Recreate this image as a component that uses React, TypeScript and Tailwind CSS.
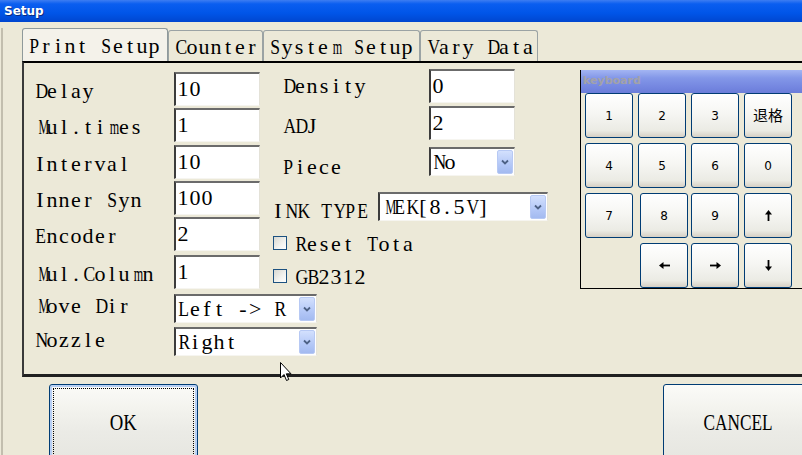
import React from "react";

// SimSun-like look: a serif face laid out in fixed 12px cells, wide glyphs narrowed
const cellFit = (c: string) => {
  if ("MWmw".includes(c)) return "scale-x-[0.55]";
  if (/[A-Z]/.test(c) && c !== "I" && c !== "J") return "scale-x-[0.8]";
  return "";
};

const Mono = ({ t }: { t: string }) => (
  <>
    {Array.from(t).map((c, i) => (
      <span key={i} className="inline-block w-[12px] text-center">
        <span className={`inline-block ${cellFit(c)}`}>{c === " " ? "\u00a0" : c}</span>
      </span>
    ))}
  </>
);

const boxBorder =
  "bg-white border-t-2 border-l-2 border-r border-b border-t-[#6b6b6b] border-l-[#3c3c3c] border-r-[#e4e2d8] border-b-[#f6f5f0]";

const ComboArrow = () => (
  <div className="w-[16px] h-full shrink-0 rounded-[2px] border border-[#b7c9f4] bg-[linear-gradient(to_bottom,#d3e0fd,#b4c8f7_60%,#a3baf0)] flex items-center justify-center">
    <svg width="8" height="6" viewBox="0 0 8 6">
      <path d="M1 1.5 L4 4.5 L7 1.5" fill="none" stroke="#4d6185" strokeWidth="1.8" />
    </svg>
  </div>
);

const TextBox = ({ value }: { value: string }) => (
  <div className={`${boxBorder} h-[34px] w-[86px] shrink-0 flex items-center pl-[1px] whitespace-nowrap`}>
    <span className="-mt-[2px]">
      <Mono t={value} />
    </span>
  </div>
);

const Combo = ({ value, w }: { value: string; w: string }) => (
  <div className={`${boxBorder} h-[29px] ${w} shrink-0 flex items-stretch pl-[1px] pr-[1px] py-[1px]`}>
    <span className="flex-1 leading-[24px] whitespace-nowrap overflow-hidden">
      <Mono t={value} />
    </span>
    <ComboArrow />
  </div>
);

const CheckBox = ({ label, className = "" }: { label: string; className?: string }) => (
  <div className={`flex items-center h-[20px] ${className}`}>
    <div className="w-[14px] h-[14px] shrink-0 border border-[#1c5180] bg-[linear-gradient(135deg,#d8d8d1,#f3f3ef_60%,#ffffff)] ml-[1px]" />
    <span className="ml-[7px] whitespace-nowrap">
      <Mono t={label} />
    </span>
  </div>
);

const Arrow = ({ dir }: { dir: "up" | "down" | "left" | "right" }) => {
  const rot = { up: 0, right: 90, down: 180, left: 270 }[dir];
  return (
    <svg width="13" height="13" viewBox="0 0 13 13">
      <g transform={`rotate(${rot} 6.5 6.5)`}>
        <path d="M6.5 1 L10 5.5 L3 5.5 Z" fill="#000" />
        <rect x="5.6" y="5" width="1.8" height="7" fill="#000" />
      </g>
    </svg>
  );
};

const KeyButton = ({ children, className = "" }: { children?: React.ReactNode; className?: string }) => (
  <div
    className={`h-[45px] w-[48px] rounded-[3px] border border-[#003c74] bg-[linear-gradient(to_bottom,#ffffff,#f6f6f3_45%,#ebebe4_85%,#d6d0c5)] flex items-center justify-center text-[12px] font-['DejaVu_Sans',sans-serif] text-black ${className}`}
  >
    {children}
  </div>
);

const leftRows = [
  { label: "Delay", value: "10", mt: "mt-[9px]" },
  { label: "Mul.times", value: "1", mt: "mt-[2px]" },
  { label: "Interval", value: "10", mt: "mt-[3px]" },
  { label: "Inner Syn", value: "100", mt: "mt-[2px]" },
  { label: "Encoder", value: "2", mt: "mt-[2px]" },
  { label: "Mul.Column", value: "1", mt: "mt-[4px]" },
];

const tabs = [
  { name: "Print Setup", w: "w-[146px]", active: true },
  { name: "Counter", w: "w-[95px]", active: false },
  { name: "System Setup", w: "w-[157px]", active: false },
  { name: "Vary Data", w: "w-[118px]", active: false },
];

export default function App() {
  return (
    <div className="relative w-[802px] h-[455px] overflow-hidden bg-[#ece9d8] text-black font-['Liberation_Serif','DejaVu_Serif',serif] text-[22px]">
      {/* title bar */}
      <div className="h-[22px] bg-[linear-gradient(to_bottom,#3d7df2_0%,#0a5ef0_18%,#0055e8_60%,#0046cf_100%)] flex items-center pl-[4px]">
        <span className="font-['DejaVu_Sans',sans-serif] font-bold text-[12px] text-white [text-shadow:1px_1px_0_#0a2a80]">
          Setup
        </span>
      </div>

      <div className="ml-[1px] border-l-[2px] border-[#c2beae] h-[433px] pl-[19px]">
        {/* tabs */}
        <div className="mt-[6px] h-[33px] flex items-end">
          {tabs.map((t) => (
            <div
              key={t.name}
              className={`${t.w} shrink-0 ${
                t.active ? "h-[33px] bg-[#f4f2ea] border-[#8f9a9b]" : "h-[31px] bg-[#ece9d8] border-[#9ba3a4]"
              } border border-b-0 rounded-t-[3px] flex items-center pl-[5px] whitespace-nowrap`}
            >
              <Mono t={t.name} />
            </div>
          ))}
        </div>

        {/* panel */}
        <div className="h-[316px] border-t-2 border-l-2 border-b-[3px] border-t-black border-l-[#3a3a3a] border-b-[#202020] flex">
          {/* left column */}
          <div className="w-[248px] shrink-0 pl-[10px]">
            {leftRows.map((r) => (
              <div key={r.label} className={`flex items-center h-[34px] ${r.mt}`}>
                <span className="w-[140px] shrink-0 whitespace-nowrap mt-[2px]">
                  <Mono t={r.label} />
                </span>
                <TextBox value={r.value} />
              </div>
            ))}
            <div className="flex items-center h-[29px] mt-[5px]">
              <span className="w-[140px] shrink-0 whitespace-nowrap -mt-[7px]">
                <Mono t="Move Dir" />
              </span>
              <Combo value="Left -> R" w="w-[143px]" />
            </div>
            <div className="flex items-center h-[29px] mt-[4px]">
              <span className="w-[140px] shrink-0 -mt-[4px]">
                <Mono t="Nozzle" />
              </span>
              <Combo value="Right" w="w-[143px]" />
            </div>
          </div>

          {/* middle column */}
          <div className="w-[276px] shrink-0">
            <div className="flex items-center h-[34px] mt-[6px] pl-[10px]">
              <span className="w-[147px] shrink-0 -mt-[2px]">
                <Mono t="Density" />
              </span>
              <TextBox value="0" />
            </div>
            <div className="flex items-center h-[34px] mt-[3px] pl-[10px]">
              <span className="w-[147px] shrink-0 mt-[4px]">
                <Mono t="ADJ" />
              </span>
              <TextBox value="2" />
            </div>
            <div className="flex items-center h-[29px] mt-[7px] pl-[10px]">
              <span className="w-[147px] shrink-0 mt-[10px]">
                <Mono t="Piece" />
              </span>
              <Combo value="No" w="w-[86px]" />
            </div>
            <div className="flex items-center h-[29px] mt-[16px]">
              <span className="w-[106px] shrink-0 mt-[8px] whitespace-nowrap">
                <Mono t="INK TYPE" />
              </span>
              <Combo value="MEK[8.5V]" w="w-[170px]" />
            </div>
            <CheckBox label="Reset Tota" className="mt-[12px]" />
            <CheckBox label="GB2312" className="mt-[13px]" />
          </div>

          {/* keyboard */}
          <div className="ml-[32px] mt-[7px] w-[240px] shrink-0 h-[219px] border border-black border-t-0">
            <div className="h-[23px] bg-[linear-gradient(to_bottom,#a3b5f3,#8397e8_35%,#7486e0_75%,#6b7dd9)] flex items-center pl-[2px]">
              <span className="font-['DejaVu_Sans',sans-serif] font-bold text-[11px] text-[#a2a2a8]">keyboard</span>
            </div>
            <div className="pl-[4px] grid grid-cols-[48px_48px_48px_48px] gap-x-[5px] gap-y-[5px]">
              <KeyButton>1</KeyButton>
              <KeyButton>2</KeyButton>
              <KeyButton>3</KeyButton>
              <KeyButton className="text-[15px] font-['Noto_Sans_CJK_SC',sans-serif]">退格</KeyButton>
              <KeyButton>4</KeyButton>
              <KeyButton>5</KeyButton>
              <KeyButton>6</KeyButton>
              <KeyButton>0</KeyButton>
              <KeyButton>7</KeyButton>
              <KeyButton className="ml-[2px]">8</KeyButton>
              <KeyButton>9</KeyButton>
              <KeyButton>
                <Arrow dir="up" />
              </KeyButton>
              <div />
              <KeyButton className="ml-[2px]">
                <Arrow dir="left" />
              </KeyButton>
              <KeyButton>
                <Arrow dir="right" />
              </KeyButton>
              <KeyButton>
                <Arrow dir="down" />
              </KeyButton>
            </div>
          </div>
        </div>

        {/* bottom buttons */}
        <div className="flex mt-[7px]">
          <div className="ml-[27px] w-[149px] h-[80px] shrink-0 rounded-[3px] border border-[#003c74] bg-[linear-gradient(to_bottom,#fbfbf8,#f3f3ee_30%,#ebebe6_60%,#e6e6e0)] p-[1px] shadow-[inset_0_0_0_2px_#b8d0f5]">
            <div className="mt-[2px] mx-[2px] h-[74px] border border-dotted border-black flex items-start justify-center pt-[15px]">
              <span className="text-[24px] inline-block scale-x-[0.78]">OK</span>
            </div>
          </div>
          <div className="ml-[465px] w-[150px] h-[80px] shrink-0 rounded-[3px] border border-[#003c74] bg-[linear-gradient(to_bottom,#fbfbf8,#f3f3ee_30%,#ebebe6_60%,#e6e6e0)] flex items-start justify-center pt-[19px]">
            <span className="text-[24px] inline-block scale-x-[0.72]">CANCEL</span>
          </div>
        </div>
      </div>

      {/* mouse pointer */}
      <svg className="absolute left-[280px] top-[362px]" width="13" height="21" viewBox="0 0 13 21">
        <path d="M0.5 0.5 L0.5 16 L4 12.5 L6.5 18.5 L8.8 17.5 L6.3 11.8 L11 11.8 Z" fill="#fff" stroke="#000" strokeWidth="1" />
      </svg>
    </div>
  );
}
